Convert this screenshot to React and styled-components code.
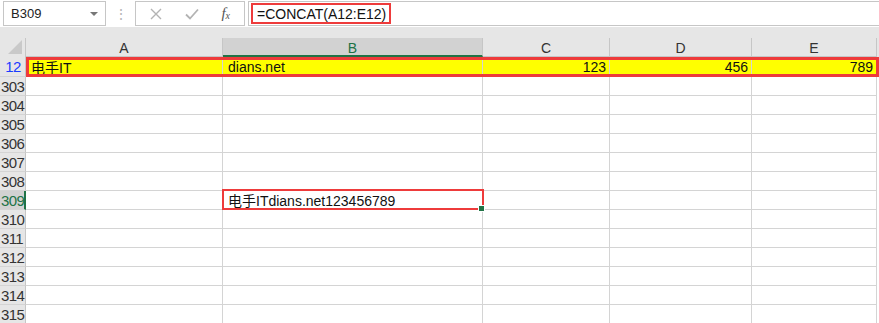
import React from 'react';
import styled, { createGlobalStyle } from 'styled-components';

const GlobalStyle = createGlobalStyle`
  html, body { margin: 0; padding: 0; background: #fff; }
  body { font-family: "Liberation Sans", "Noto Sans CJK SC", Arial, sans-serif; overflow: hidden; }
`;

const COLS = [
  { key: 'A', width: 197 },
  { key: 'B', width: 260 },
  { key: 'C', width: 127 },
  { key: 'D', width: 142 },
  { key: 'E', width: 125 },
];

const ROWS = [303, 304, 305, 306, 307, 308, 309, 310, 311, 312, 313, 314, 315];

export default function App () {
  return (
    <Page>
      <GlobalStyle />
      <FormulaBar>
        <NameBox>
          <span>B309</span>
          <Caret />
        </NameBox>
        <Dots>⋮</Dots>
        <ActionBox>
          <Action>
            <svg width="12" height="12" viewBox="0 0 12 12">
              <path d="M1 1L11 11M11 1L1 11" stroke="#b3b3b3" strokeWidth="1.4" fill="none" />
            </svg>
          </Action>
          <Action>
            <svg width="14" height="12" viewBox="0 0 14 12">
              <path d="M1 6.5L5 10.5L13 1.5" stroke="#b3b3b3" strokeWidth="1.8" fill="none" />
            </svg>
          </Action>
          <Fx>f<sub>x</sub></Fx>
        </ActionBox>
        <FormulaInput>
          <FormulaText>=CONCAT(A12:E12)</FormulaText>
        </FormulaInput>
      </FormulaBar>
      <Gap />
      <Sheet>
        <HeaderRow>
          <Corner>
            <svg width="14" height="14" viewBox="0 0 14 14">
              <path d="M14 0L14 14L0 14Z" fill="#c9c9c9" />
            </svg>
          </Corner>
          {COLS.map(c => (
            <ColHead key={c.key} $w={c.width} $active={c.key === 'B'}>{c.key}</ColHead>
          ))}
        </HeaderRow>
        <DataRow $marked>
          <RowHead $blue>12</RowHead>
          <Cell $w={197} $fill>电手IT</Cell>
          <Cell $w={260} $fill>dians.net</Cell>
          <Cell $w={127} $fill $num>123</Cell>
          <Cell $w={142} $fill $num>456</Cell>
          <Cell $w={125} $fill $num>789</Cell>
        </DataRow>
        {ROWS.map(r => (
          <DataRow key={r}>
            <RowHead $active={r === 309}>{r}</RowHead>
            <Cell $w={197} />
            <Cell $w={260} $selected={r === 309}>
              {r === 309 && '电手ITdians.net123456789'}
              {r === 309 && <Handle />}
            </Cell>
            <Cell $w={127} />
            <Cell $w={142} />
            <Cell $w={125} />
          </DataRow>
        ))}
      </Sheet>
    </Page>
  );
}

const Page = styled.div`
  width: 879px;
  height: 323px;
  overflow: hidden;
  background: #fff;
`;

const FormulaBar = styled.div`
  display: flex;
  align-items: stretch;
  height: 27px;
  box-sizing: border-box;
  padding: 1px 0 1px 3px;
  background: #fff;
`;

const NameBox = styled.div`
  width: 103px;
  box-sizing: border-box;
  border: 1px solid #c6c6c6;
  display: flex;
  align-items: center;
  justify-content: space-between;
  padding: 0 7px 0 7px;
  font-size: 13px;
  color: #222;
`;

const Caret = styled.span`
  width: 0;
  height: 0;
  border-left: 4px solid transparent;
  border-right: 4px solid transparent;
  border-top: 4px solid #777;
`;

const Dots = styled.div`
  width: 29px;
  display: flex;
  align-items: center;
  justify-content: center;
  color: #b5b5b5;
  font-size: 14px;
`;

const ActionBox = styled.div`
  width: 110px;
  box-sizing: border-box;
  border: 1px solid #c6c6c6;
  display: flex;
  align-items: center;
  justify-content: space-between;
  padding: 0 14px 0 14px;
`;

const Action = styled.div`
  display: flex;
  align-items: center;
`;

const Fx = styled.div`
  font-family: "Liberation Serif", serif;
  font-style: italic;
  font-size: 15px;
  color: #555;
  sub { font-size: 10px; vertical-align: -1px; }
`;

const FormulaInput = styled.div`
  flex: 1;
  margin-left: 3px;
  box-sizing: border-box;
  border: 1px solid #c6c6c6;
  border-right: none;
  display: flex;
  align-items: center;
  padding-left: 2px;
`;

const FormulaText = styled.div`
  border: 2px solid #ee3b3b;
  height: 21px;
  box-sizing: border-box;
  padding: 0 3px 0 4px;
  display: flex;
  align-items: center;
  font-size: 14px;
  color: #111;
`;

const Gap = styled.div`
  height: 11px;
  background: #e6e6e6;
`;

const Sheet = styled.div`
  display: flex;
  flex-direction: column;
`;

const HeaderRow = styled.div`
  display: flex;
  height: 19px;
  background: #e6e6e6;
`;

const Corner = styled.div`
  width: 26px;
  box-sizing: border-box;
  border-right: 1px solid #c6c6c6;
  display: flex;
  align-items: flex-end;
  justify-content: flex-end;
  padding: 0 3px 3px 0;
`;

const ColHead = styled.div`
  width: ${p => p.$w}px;
  box-sizing: border-box;
  border-right: 1px solid #c6c6c6;
  border-bottom: ${p => (p.$active ? '2px solid #217346' : '1px solid #c6c6c6')};
  background: ${p => (p.$active ? '#d2d2d2' : '#e6e6e6')};
  color: ${p => (p.$active ? '#217346' : '#333')};
  font-size: 14px;
  display: flex;
  align-items: center;
  justify-content: center;
  padding-top: 2px;
`;

const DataRow = styled.div`
  display: flex;
  height: ${p => (p.$marked ? 20 : 19)}px;
  position: relative;
  ${p => p.$marked && `
    &::after {
      content: '';
      position: absolute;
      left: 26px;
      right: 0;
      top: 0;
      bottom: 0;
      border: 3px solid #ee3b3b;
      pointer-events: none;
    }
  `}
`;

const RowHead = styled.div`
  width: 26px;
  box-sizing: border-box;
  background: ${p => (p.$active ? '#d2d2d2' : '#e6e6e6')};
  border-right: ${p => (p.$active ? '2px solid #217346' : '1px solid #c6c6c6')};
  border-bottom: 1px solid #d4d4d4;
  color: ${p => (p.$blue ? '#1a3cff' : p.$active ? '#217346' : '#333')};
  font-size: 15px;
  letter-spacing: -0.6px;
  display: flex;
  align-items: center;
  justify-content: ${p => (p.$blue ? 'center' : 'flex-start')};
  padding-left: 1px;
  overflow: hidden;
`;

const Cell = styled.div`
  width: ${p => p.$w}px;
  box-sizing: border-box;
  position: relative;
  z-index: ${p => (p.$selected ? 2 : 'auto')};
  background: ${p => (p.$fill ? '#ffff00' : '#fff')};
  border-right: 1px solid #d4d4d4;
  border-bottom: 1px solid #d4d4d4;
  font-size: 14px;
  color: #111;
  display: flex;
  align-items: center;
  justify-content: ${p => (p.$num ? 'flex-end' : 'flex-start')};
  padding: 0 3px 0 5px;
  white-space: nowrap;
  ${p => p.$selected && `
    &::after {
      content: '';
      position: absolute;
      left: -1px;
      right: -2px;
      top: -2px;
      bottom: -1px;
      border: 2px solid #ee3b3b;
      pointer-events: none;
    }
  `}
`;

const Handle = styled.span`
  position: absolute;
  z-index: 3;
  right: -3px;
  bottom: -3px;
  width: 5px;
  height: 5px;
  background: #217346;
  border: 1px solid #fff;
`;
